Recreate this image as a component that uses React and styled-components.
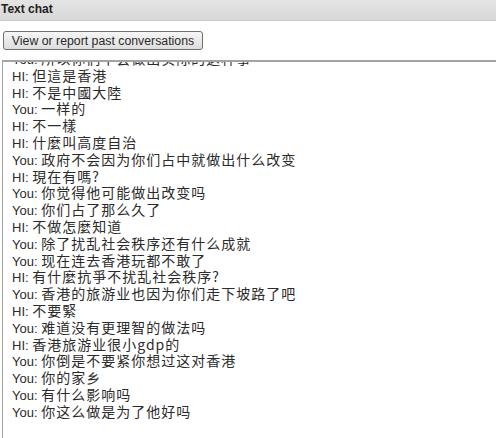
import React from 'react'
import styled, { createGlobalStyle } from 'styled-components'

const messages = [
  ['You', '所以你们不会做出实际的这种事'],
  ['HI', '但這是香港'],
  ['HI', '不是中國大陸'],
  ['You', '一样的'],
  ['HI', '不一樣'],
  ['HI', '什麼叫高度自治'],
  ['You', '政府不会因为你们占中就做出什么改变'],
  ['HI', '現在有嗎?'],
  ['You', '你觉得他可能做出改变吗'],
  ['You', '你们占了那么久了'],
  ['HI', '不做怎麼知道'],
  ['You', '除了扰乱社会秩序还有什么成就'],
  ['You', '现在连去香港玩都不敢了'],
  ['HI', '有什麼抗爭不扰乱社会秩序?'],
  ['You', '香港的旅游业也因为你们走下坡路了吧'],
  ['HI', '不要緊'],
  ['You', '难道没有更理智的做法吗'],
  ['HI', '香港旅游业很小gdp的'],
  ['You', '你倒是不要紧你想过这对香港'],
  ['You', '你的家乡'],
  ['You', '有什么影响吗'],
  ['You', '你这么做是为了他好吗'],
]

export default function App() {
  return (
    <>
      <GlobalStyle />
      <Page>
        <Header>Text chat</Header>
        <Toolbar>
          <HistoryButton type="button">View or report past conversations</HistoryButton>
        </Toolbar>
        <Log>
          <Lines>
            {messages.map(([who, text], i) => (
              <Line key={i}>
                {who}: <Body>{text}</Body>
              </Line>
            ))}
          </Lines>
        </Log>
      </Page>
    </>
  )
}

const GlobalStyle = createGlobalStyle`
  html, body {
    margin: 0;
    padding: 0;
    background: #fff;
    font-family: "Liberation Sans", Arial, "Noto Sans CJK SC", sans-serif;
  }
`

const Page = styled.div`
  display: flex;
  flex-direction: column;
  height: 100vh;
  overflow: hidden;
`

const Header = styled.div`
  height: 21px;
  box-sizing: border-box;
  padding: 2px 1px 0;
  font-size: 12px;
  font-weight: bold;
  color: #222;
  background: linear-gradient(to bottom, #e4e4e4, #d8d8d8);
  border-bottom: 1px solid #c9c9c9;
`

const Toolbar = styled.div`
  display: flex;
  padding: 10px 0 0 3px;
`

const HistoryButton = styled.button`
  width: 200px;
  height: 19px;
  padding: 0;
  font-family: "Liberation Sans", Arial, sans-serif;
  font-size: 12.3px;
  color: #2a2a2a;
  background: linear-gradient(to bottom, #f6f6f6, #dedede);
  border: 1px solid #707070;
  border-radius: 3px;
`

const Log = styled.div`
  flex: 1;
  margin: 10px 0 0 2px;
  border-top: 2px solid #a3a3a3;
  border-left: 1px solid #a0a0a0;
  overflow: hidden;
  padding-left: 9px;
`

const Lines = styled.div`
  margin-top: -12px;
`

const Line = styled.div`
  font-size: 13px;
  line-height: 16.8px;
  height: 16.8px;
  color: #2b2b2b;
  white-space: nowrap;
`

const Body = styled.span`
  font-family: "Noto Sans CJK SC", "Liberation Sans", sans-serif;
  font-size: 14px;
  letter-spacing: 1px;
`
